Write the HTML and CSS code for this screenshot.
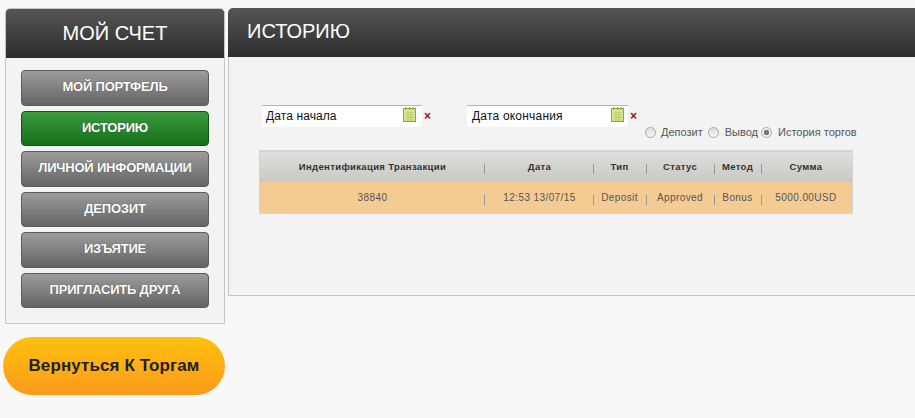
FILE: index.html
```html
<!DOCTYPE html>
<html lang="ru">

<head>
    <meta charset="UTF-8">
    <meta name="viewport" content="width=device-width, initial-scale=1.0">
    <title>История</title>
    <link rel="stylesheet" href="styles.css">
</head>

<body>
    <div class="sidebar">
        <div class="panel">
            <h2 class="panel-title">МОЙ СЧЕТ</h2>
            <div class="menu">
                <a class="menu-btn" href="#">МОЙ ПОРТФЕЛЬ</a>
                <a class="menu-btn active" href="#">ИСТОРИЮ</a>
                <a class="menu-btn" href="#">ЛИЧНОЙ ИНФОРМАЦИИ</a>
                <a class="menu-btn" href="#">ДЕПОЗИТ</a>
                <a class="menu-btn" href="#">ИЗЪЯТИЕ</a>
                <a class="menu-btn" href="#">ПРИГЛАСИТЬ ДРУГА</a>
            </div>
        </div>
        <a class="back-btn" href="#">Вернуться К Торгам</a>
    </div>
    <div class="main">
        <h1 class="main-title">ИСТОРИЮ</h1>
        <div class="main-body">
            <div class="filters">
                <div class="date-field">
                    <span class="date-box">Дата начала
                        <svg class="cal" width="14" height="15" viewBox="0 0 14 15">
                            <rect x="0.5" y="1.5" width="12" height="13" fill="#dbe88e" stroke="#8fa33c" />
                            <path d="M2 5.5h9M2 8h9M2 10.5h9M2 13h9M5 4v10M8 4v10" stroke="#bccf6a" stroke-width="1" />
                            <path d="M3 0v3M6.500 0v3M10 0v3" stroke="#8fa33c" stroke-width="1" />
                        </svg>
                    </span>
                    <span class="clear">×</span>
                </div>
                <div class="date-field date-end">
                    <span class="date-box">Дата окончания
                        <svg class="cal" width="14" height="15" viewBox="0 0 14 15">
                            <rect x="0.5" y="1.5" width="12" height="13" fill="#dbe88e" stroke="#8fa33c" />
                            <path d="M2 5.5h9M2 8h9M2 10.5h9M2 13h9M5 4v10M8 4v10" stroke="#bccf6a" stroke-width="1" />
                            <path d="M3 0v3M6.500 0v3M10 0v3" stroke="#8fa33c" stroke-width="1" />
                        </svg>
                    </span>
                    <span class="clear">×</span>
                </div>
                <div class="radios">
                    <span class="radio"></span><span class="radio-label">Депозит</span>
                    <span class="radio"></span><span class="radio-label">Вывод</span>
                    <span class="radio checked"></span><span class="radio-label">История торгов</span>
                </div>
            </div>
            <table class="history">
                <thead>
                    <tr>
                        <th>Индентификация Транзакции</th>
                        <th>Дата</th>
                        <th>Тип</th>
                        <th>Статус</th>
                        <th>Метод</th>
                        <th>Сумма</th>
                    </tr>
                </thead>
                <tbody>
                    <tr>
                        <td>38840</td>
                        <td>12:53 13/07/15</td>
                        <td>Deposit</td>
                        <td>Approved</td>
                        <td>Bonus</td>
                        <td>5000.00USD</td>
                    </tr>
                </tbody>
            </table>
        </div>
    </div>
</body>

</html>
```

FILE: styles.css
```css
html {
    height: 100%;
}

body {
    font-family: "Liberation Sans", Arial, sans-serif;
    background-color: #f8f8f8;
    margin: 0;
    padding: 8px 0 0 3px;
    display: flex;
    align-items: flex-start;
    overflow: hidden;
    height: 410px;
}

.sidebar {
    width: 222px;
    flex: none;
}

.panel {
    margin-left: 2px;
    width: 220px;
    box-sizing: border-box;
    height: 316px;
    background-color: #f3f3f3;
    border: 1px solid #c4c4c4;
    border-radius: 5px 5px 0 0;
}

.panel-title {
    margin: 0;
    height: 49px;
    line-height: 48px;
    text-align: center;
    font-size: 20px;
    font-weight: normal;
    color: #fff;
    background: linear-gradient(#555, #2d2d2d);
    border-radius: 4px 4px 0 0;
}

.menu {
    padding: 12px 15px 0;
    display: flex;
    flex-direction: column;
    gap: 5.1px;
}

.menu-btn {
    display: block;
    height: 35.5px;
    box-sizing: border-box;
    line-height: 31px;
    text-align: center;
    text-decoration: none;
    font-size: 13px;
    font-weight: bold;
    letter-spacing: -0.2px;
    color: #fff;
    text-shadow: 0 0 1px #444;
    background: linear-gradient(#9c9c9c, #646464);
    border: 1px solid #5c5c5c;
    border-radius: 4px;
}

.menu-btn.active {
    background: linear-gradient(#3a9a3c, #14701a);
    border-color: #12551a;
}

.back-btn {
    display: block;
    margin-top: 13px;
    height: 58px;
    line-height: 57px;
    text-align: center;
    text-decoration: none;
    font-size: 17px;
    font-weight: bold;
    letter-spacing: 0.1px;
    color: #1f1f1f;
    background: linear-gradient(#ffc10e, #fb9a1c);
    border-radius: 29px;
}

.main {
    margin-left: 3px;
    width: 687px;
    flex: none;
}

.main-title {
    margin: 0;
    height: 49px;
    line-height: 46px;
    padding-left: 19px;
    font-size: 20px;
    font-weight: normal;
    color: #fff;
    background: linear-gradient(#555, #2d2d2d);
    border-radius: 5px 0 0 0;
}

.main-body {
    box-sizing: border-box;
    height: 239px;
    padding: 48px 0 0 30px;
    background-color: #f3f3f3;
    border: 1px solid #c4c4c4;
    border-top: 0;
    border-right: 0;
}

.filters {
    display: flex;
    align-items: flex-start;
    height: 45px;
    padding-left: 3px;
}

.date-field {
    display: flex;
    align-items: center;
    width: 205px;
}

.date-box {
    width: 160px;
    height: 22px;
    box-sizing: border-box;
    display: flex;
    justify-content: space-between;
    align-items: center;
    padding: 0 5px 2px 4px;
    font-size: 12px;
    letter-spacing: 0.1px;
    color: #111;
    background-color: #fff;
    border-top: 1px solid #b5b5b5;
}

.date-end .date-box {
    width: 161px;
    padding: 0 3px 2px 5px;
    letter-spacing: 0.2px;
}

.cal {
    margin-bottom: 3px;
}

.clear {
    margin-left: 2px;
    font-size: 12px;
    font-weight: bold;
    line-height: 12px;
    color: #a01020;
}

.radios {
    display: flex;
    align-items: center;
    margin: 21px 0 0 -27px;
    font-size: 11px;
    color: #555;
}

.radio {
    width: 11px;
    height: 11px;
    box-sizing: border-box;
    border: 1px solid #aaa;
    border-radius: 50%;
    background: linear-gradient(#ddd, #f5f5f5);
}

.radio.checked {
    background: radial-gradient(circle, #777 0 2.5px, #eee 3px);
}

.radio-label {
    margin: 0 5px 0 5px;
}

.radio-label:nth-of-type(4) {
    margin-left: 6px;
    margin-right: 3px;
}

.radio-label:nth-of-type(6) {
    margin-left: 6px;
}

.history {
    width: 594px;
    table-layout: fixed;
    border-collapse: collapse;
    border: 1px solid #d6d6d6;
}

.history th:nth-child(1) { width: 225px; }
.history th:nth-child(2) { width: 109px; }
.history th:nth-child(3) { width: 53px; }
.history th:nth-child(4) { width: 68px; }
.history th:nth-child(5) { width: 47px; }

.history th,
.history td {
    height: 31px;
    padding: 0;
    text-align: center;
    background-clip: padding-box;
    position: relative;
}

.history th:nth-child(n+3),
.history td:nth-child(n+3) {
    text-indent: -2px;
}

.history th {
    font-size: 9.5px;
    letter-spacing: 0.35px;
    color: #333;
    background: linear-gradient(#dfdfdb, #c6c8c2);
}

.history td {
    font-size: 10px;
    letter-spacing: 0.4px;
    color: #555;
    background-color: #f5cb94;
}

.history th:not(:last-child)::after,
.history td:not(:last-child)::after {
    content: "";
    position: absolute;
    right: 0;
    top: 13px;
    height: 10px;
    border-right: 1px solid #999;
}
```
